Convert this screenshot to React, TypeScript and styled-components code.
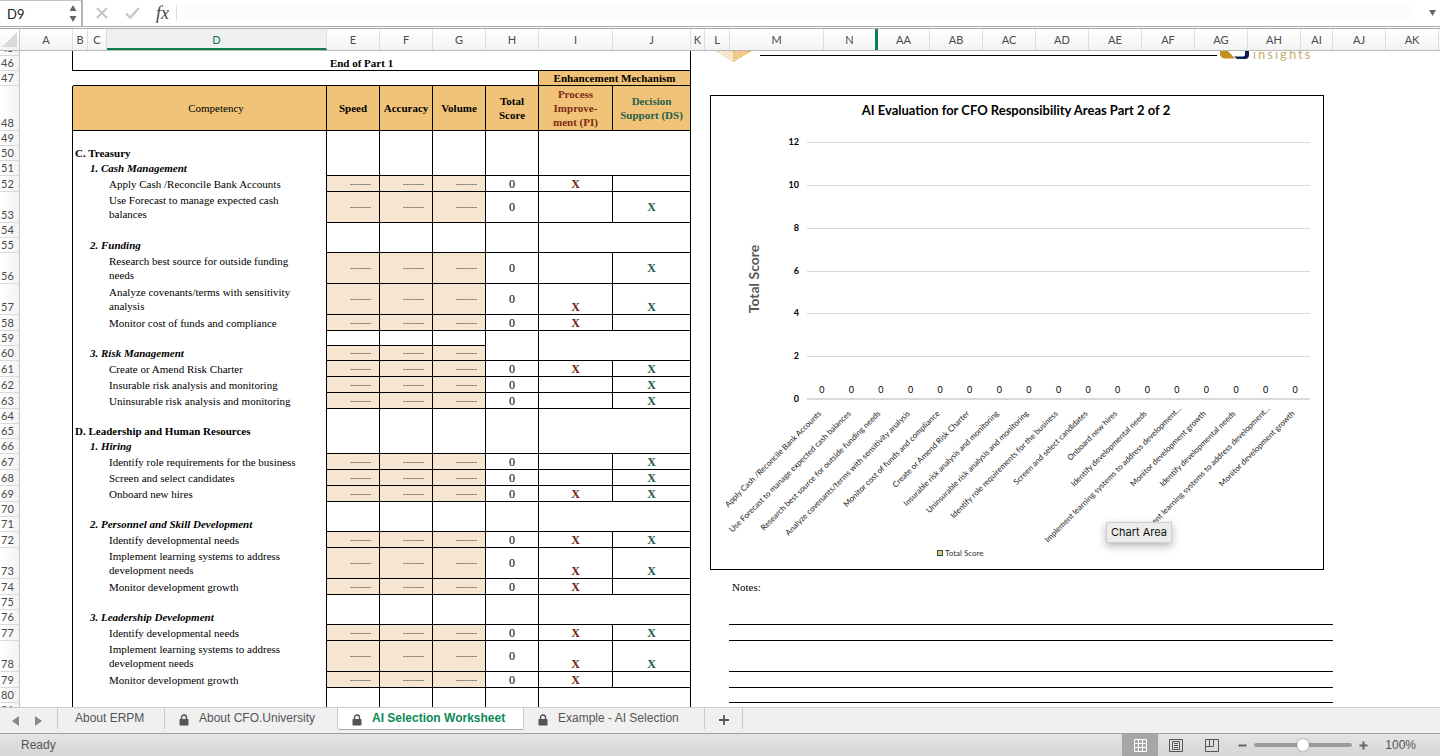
import React from "react";
import styled, { createGlobalStyle, css } from "styled-components";

const GlobalStyle = createGlobalStyle`
  *, *::before, *::after { box-sizing: border-box; }
  html, body { margin: 0; padding: 0; }
  body { background: #fff; overflow: hidden; font-family: "Liberation Sans", Arial, sans-serif; }
  button, input { font: inherit; color: inherit; margin: 0; padding: 0; border: 0; background: none; border-radius: 0; }
`;

const UI = `Lato, Calibri, sans-serif`;
const SERIF = `"Liberation Serif", "Times New Roman", serif`;
const GOLD = "#f0c378";
const CREAM = "#f6e6d1";
const RED = "#6f1d10";
const TEAL = "#1f5848";

const Workbook = styled.div`
  display: flex;
  flex-direction: column;
  height: 100vh;
  background: #fff;
`;

/* ---------- formula bar ---------- */

const FormulaBar = styled.header`
  display: flex;
  align-items: center;
  flex: none;
  height: 29px;
  border-bottom: 3px double #aaaaaa;
  background: #fff;
`;

const NameBox = styled.div`
  display: flex;
  align-items: center;
  align-self: stretch;
  width: 83px;
  padding: 0 4px 0 7px;
  border-top: 1px solid #c4c4c4;
  border-right: 2px solid #b4b4b4;
`;

const NameInput = styled.input`
  flex: 1;
  min-width: 0;
  font-family: ${UI};
  font-size: 13px;
  line-height: 20px;
  color: #222;
  outline: none;
`;

const IconButton = styled.button`
  display: flex;
  align-items: center;
  justify-content: center;
  flex: none;
  svg { display: block; }
`;

const FormulaActions = styled.div`
  display: flex;
  align-items: center;
  gap: 16px;
  height: 16px;
  padding: 0 7px 0 12px;
  border-right: 1px solid #dcdcdc;
`;

const FxButton = styled(IconButton)`
  font-family: ${SERIF};
  font-style: italic;
  font-size: 18px;
  line-height: 16px;
  color: #444;
`;

const FormulaInput = styled.input`
  flex: 1;
  min-width: 0;
  height: 18px;
  margin: 0 15px 0 7px;
  background: #fcfcfc;
  outline: none;
`;

const ExpandButton = styled(IconButton)`
  width: 15px;
`;

/* ---------- column letters ---------- */

const ColumnBar = styled.div`
  display: flex;
  flex: none;
  height: 22px;
  overflow: hidden;
  border-bottom: 1px solid #b6b6b6;
  background: linear-gradient(#ffffff, #f3f3f3);
`;

const Corner = styled.div`
  display: flex;
  align-items: flex-end;
  justify-content: flex-end;
  flex: none;
  width: 20px;
  padding: 0 2px 3px 0;
  border-right: 1px solid #c8c8c8;
`;

const ColumnHead = styled.div<{ $w: number; $active?: boolean; $split?: boolean }>`
  flex: none;
  width: ${(p) => p.$w}px;
  border-right: 1px solid #dedede;
  font-family: ${UI};
  font-size: 11px;
  line-height: 21px;
  text-align: center;
  color: #4a4a4a;
  ${(p) =>
    p.$active &&
    css`
      color: #0f7b47;
      background: #f0f0f0;
      border-bottom: 2px solid #0f7f4c;
    `}
  ${(p) => p.$split && css`border-right: 3px solid #0f7f4c;`}
`;

/* ---------- sheet ---------- */

const Sheet = styled.main`
  display: flex;
  align-items: flex-start;
  flex: 1;
  min-height: 0;
  overflow: hidden;
`;

const Grid = styled.table`
  flex: none;
  width: 691px;
  table-layout: fixed;
  border-collapse: separate;
  border-spacing: 0;
  font-family: ${SERIF};
  font-size: 11px;
  line-height: 14px;
  color: #000;
  th, td { padding: 0; }
`;

const Row = styled.tr<{ $h: number }>`
  height: ${(p) => p.$h}px;
`;

const RowNumber = styled.th`
  border-right: 1px solid #c4c4c4;
  border-bottom: 1px solid #dadada;
  background: linear-gradient(to right, #ffffff, #f3f3f3);
  font-family: ${UI};
  font-size: 11px;
  font-weight: 400;
  line-height: 14px;
  vertical-align: bottom;
  color: #4a4a4a;
`;

const NumberClip = styled.span<{ $h: number }>`
  display: flex;
  align-items: flex-end;
  justify-content: center;
  height: ${(p) => p.$h}px;
  padding-right: 4px;
  overflow: hidden;
`;

const Cell = styled.td<{
  $line?: boolean;
  $open?: boolean;
  $fill?: string;
  $color?: string;
  $bold?: boolean;
  $valign?: string;
}>`
  border-right: ${(p) => (p.$open ? "0" : "1px solid #000")};
  border-bottom: ${(p) => (p.$line ? "1px solid #000" : "0")};
  background: ${(p) => p.$fill || "transparent"};
  color: ${(p) => p.$color || "#000"};
  font-weight: ${(p) => (p.$bold ? 700 : 400)};
  text-align: center;
  vertical-align: ${(p) => p.$valign || "middle"};
  white-space: pre-line;
`;

const Score = styled(Cell)`
  font-size: 12px;
`;

const EndCell = styled(Cell)`
  && { padding-right: 40px; }
`;

const CompetencyHead = styled(Cell)`
  && { padding-left: 33px; }
`;

const indent = { section: 2, group: 17, item: 36 };

const Competency = styled(Cell)<{ $level: keyof typeof indent }>`
  && { padding: 0 0 1px ${(p) => indent[p.$level]}px; }
  text-align: left;
  font-weight: ${(p) => (p.$level === "item" ? 400 : 700)};
  font-style: ${(p) => (p.$level === "group" ? "italic" : "normal")};
`;

const Rating = styled(Cell)`
  && { padding-right: 8px; }
  text-align: right;
  font-size: 9px;
  font-weight: 700;
  color: #5f5952;
`;

type Line = {
  n: number;
  h: number;
  text?: string;
  level?: keyof typeof indent;
  kind: "blank" | "item" | "rated";
  pi?: boolean;
  ds?: boolean;
  low?: boolean;
  line?: boolean;
  lineEFG?: boolean;
};

const blank = (n: number, o: Partial<Line> = {}): Line => ({ n, h: 15, kind: "blank", ...o });
const item = (n: number, text: string, marks: string, low = false): Line => ({
  n,
  h: text.includes("\n") ? 31 : 16,
  text,
  level: "item",
  kind: "item",
  pi: marks.includes("P"),
  ds: marks.includes("D"),
  low,
  line: true,
});

const lines: Line[] = [
  blank(49),
  blank(50, { text: "C. Treasury", level: "section" }),
  blank(51, { text: "1. Cash Management", level: "group", line: true }),
  item(52, "Apply Cash /Reconcile Bank Accounts", "P"),
  item(53, "Use Forecast to manage expected cash\nbalances", "D"),
  blank(54),
  blank(55, { text: "2. Funding", level: "group", line: true }),
  item(56, "Research best source for outside funding\nneeds", "D"),
  item(57, "Analyze covenants/terms with sensitivity\nanalysis", "PD", true),
  item(58, "Monitor cost of funds and compliance", "P"),
  blank(59, { lineEFG: true }),
  blank(60, { text: "3. Risk Management", level: "group", kind: "rated", line: true }),
  item(61, "Create or Amend Risk Charter", "PD"),
  item(62, "Insurable risk analysis and monitoring", "D"),
  item(63, "Uninsurable risk analysis and monitoring", "D"),
  blank(64),
  blank(65, { text: "D. Leadership and Human Resources", level: "section" }),
  blank(66, { text: "1. Hiring", level: "group", line: true }),
  item(67, "Identify role requirements for the business", "D"),
  item(68, "Screen and select candidates", "D"),
  item(69, "Onboard new hires", "PD"),
  blank(70),
  blank(71, { text: "2. Personnel and Skill Development", level: "group", line: true }),
  item(72, "Identify developmental needs", "PD"),
  item(73, "Implement learning systems to address\ndevelopment needs", "PD", true),
  item(74, "Monitor development growth", "P"),
  blank(75),
  blank(76, { text: "3. Leadership Development", level: "group", line: true }),
  item(77, "Identify developmental needs", "PD"),
  item(78, "Implement learning systems to address\ndevelopment needs", "PD", true),
  item(79, "Monitor development growth", "P"),
  blank(80),
  blank(81),
];

const columns: [string, number][] = [
  ["A", 53], ["B", 15], ["C", 19], ["D", 220], ["E", 53], ["F", 53], ["G", 53], ["H", 53],
  ["I", 74], ["J", 78], ["K", 14], ["L", 25], ["M", 94], ["N", 54], ["AA", 52], ["AB", 53],
  ["AC", 53], ["AD", 53], ["AE", 53], ["AF", 53], ["AG", 53], ["AH", 53], ["AI", 32], ["AJ", 53],
  ["AK", 53],
];

const Num = ({ n, h }: { n: number; h: number }) => (
  <RowNumber scope="row">
    <NumberClip $h={h - 1}>{n}</NumberClip>
  </RowNumber>
);

const SheetRow = ({ l }: { l: Line }) => {
  const rated = l.kind !== "blank";
  return (
    <Row $h={l.h}>
      <Num n={l.n} h={l.h} />
      <Cell />
      <Competency $level={l.level || "item"}>{l.text}</Competency>
      {["E", "F", "G"].map((c) => (
        <Rating key={c} $line={l.line || l.lineEFG} $fill={rated ? CREAM : undefined}>
          {rated ? "-------" : ""}
        </Rating>
      ))}
      <Score $line={l.line}>{l.kind === "item" ? "0" : ""}</Score>
      {l.kind === "item" ? (
        <>
          <Score $line $bold $color={RED} $valign={l.low ? "bottom" : "middle"}>{l.pi ? "X" : ""}</Score>
          <Score $line $bold $color={TEAL} $valign={l.low ? "bottom" : "middle"}>{l.ds ? "X" : ""}</Score>
        </>
      ) : (
        <Cell colSpan={2} $line={l.line} />
      )}
    </Row>
  );
};

/* ---------- right-hand side ---------- */

const Side = styled.section`
  flex: 1;
  min-width: 0;
  padding: 0 107px 0 19px;
`;

const Masthead = styled.div`
  display: flex;
  align-items: flex-start;
  height: 44px;
  margin-right: 19px;
  svg { display: block; flex: none; }
`;

const Rule = styled.div`
  flex: 1;
  height: 5px;
  margin: 0 3px 0 8px;
  border-bottom: 1px solid #000;
`;

const ChartBox = styled.figure`
  position: relative;
  margin: 0 9px 0 0;
  border: 1px solid #000;
  background: #fff;
  svg { display: block; width: 100%; height: auto; }
`;

const Tooltip = styled.div`
  position: absolute;
  left: 395px;
  top: 426px;
  padding: 0 4px;
  border: 1px solid #cfcfcf;
  background: #ececec;
  box-shadow: 0 3px 8px rgba(0, 0, 0, 0.3);
  font-family: Inter, sans-serif;
  font-size: 11px;
  line-height: 19px;
  white-space: nowrap;
  color: #111;
`;

const Notes = styled.div`
  font-family: ${SERIF};
  font-size: 11px;
  line-height: 14px;
  padding: 10px 0 0 19px;
`;

const NotesTitle = styled.div`
  padding-left: 3px;
`;

const NoteLine = styled.div<{ $h: number }>`
  height: ${(p) => p.$h}px;
  border-bottom: 1px solid #000;
`;

const categories = [
  "Apply Cash /Reconcile Bank Accounts",
  "Use Forecast to manage expected cash balances",
  "Research best source for outside funding needs",
  "Analyze covenants/terms with sensitivity analysis",
  "Monitor cost of funds and compliance",
  "Create or Amend Risk Charter",
  "Insurable risk analysis and monitoring",
  "Uninsurable risk analysis and monitoring",
  "Identify role requirements for the business",
  "Screen and select candidates",
  "Onboard new hires",
  "Identify developmental needs",
  "Implement learning systems to address development…",
  "Monitor development growth",
  "Identify developmental needs",
  "Implement learning systems to address development…",
  "Monitor development growth",
];

const PLOT = { left: 96, right: 599, top: 46, bottom: 303 };

const Chart = () => {
  const step = (PLOT.right - PLOT.left) / categories.length;
  return (
    <svg viewBox="0 0 612 473" role="img" aria-label="AI Evaluation for CFO Responsibility Areas Part 2 of 2" fontFamily={UI}>
      <text x="305" y="19" textAnchor="middle" fontSize="13" fontWeight="700">
        AI Evaluation for CFO Responsibility Areas Part 2 of 2
      </text>
      {[12, 10, 8, 6, 4, 2, 0].map((v, i) => {
        const y = Math.round(PLOT.top + ((PLOT.bottom - PLOT.top) * i) / 6);
        return (
          <g key={v}>
            <rect x={PLOT.left} y={v ? y : y - 1} width={PLOT.right - PLOT.left} height={v ? 1 : 2} fill="#d9d9d9" />
            <text x="88" y={y + 3} textAnchor="end" fontSize="9" fontWeight="700">{v}</text>
          </g>
        );
      })}
      <text transform="translate(48 183) rotate(-90)" textAnchor="middle" fontSize="14" fontWeight="700" fill="#595959">
        Total Score
      </text>
      {categories.map((c, i) => {
        const x = PLOT.left + step * (i + 0.5);
        const lift = c.endsWith("…") ? 5 : 0;
        return (
          <g key={i}>
            <text x={x} y="297" textAnchor="middle" fontSize="9">0</text>
            <text transform={`translate(${x + lift} ${318 - lift}) rotate(-45)`} textAnchor="end" fontSize="8" fill="#222">
              {c}
            </text>
          </g>
        );
      })}
      <rect x="226.500" y="454.500" width="5" height="5" fill={GOLD} stroke={TEAL} />
      <text x="234" y="460" fontSize="8" fill="#333">Total Score</text>
    </svg>
  );
};

/* ---------- tabs and status ---------- */

const TabBar = styled.nav`
  display: flex;
  align-items: flex-start;
  flex: none;
  height: 26px;
  border-top: 1px solid #c9c9c9;
  background: #f0f0f0;
`;

const TabArrows = styled.div`
  display: flex;
  align-items: center;
  gap: 16px;
  width: 58px;
  height: 21px;
  padding: 4px 0 0 12px;
  border-right: 1px solid #c9c9c9;
`;

const Tab = styled.button<{ $w: number; $active?: boolean; $plain?: boolean }>`
  display: flex;
  align-items: center;
  gap: 10px;
  min-width: ${(p) => p.$w}px;
  height: 21px;
  padding: 0 0 1px ${(p) => (p.$plain ? 17 : 14)}px;
  border-right: 1px solid #c9c9c9;
  font-size: 12px;
  line-height: 20px;
  white-space: nowrap;
  color: #555;
  svg { position: relative; top: 2px; }
  ${(p) =>
    p.$active &&
    css`
      height: 22px;
      padding-bottom: 2px;
      background: #fff;
      color: #0b8a53;
      font-weight: 700;
      border-bottom: 1px solid #a8a8a8;
      border-radius: 0 0 2px 2px;
    `}
`;

const AddTab = styled(IconButton)`
  width: 38px;
  height: 21px;
  padding-top: 3px;
  border-right: 1px solid #c9c9c9;
`;

const StatusBar = styled.footer`
  display: flex;
  align-items: stretch;
  flex: none;
  height: 23px;
  border-top: 1px solid #a0a0a0;
  background: linear-gradient(#e4e4e4, #d6d6d6);
  font-size: 12px;
  line-height: 22px;
  color: #555;
`;

const Ready = styled.span`
  flex: 1;
  padding-left: 21px;
`;

const ViewButton = styled(IconButton)<{ $active?: boolean }>`
  width: 36px;
  background: ${(p) => (p.$active ? "#a6a6a6" : "transparent")};
`;

const Zoom = styled.div`
  display: flex;
  align-items: center;
  gap: 7px;
  padding: 0 24px 0 8px;
`;

const Slider = styled.input`
  appearance: none;
  width: 98px;
  height: 14px;
  &::-webkit-slider-runnable-track {
    height: 4px;
    border-radius: 2px;
    background: #9c9c9c;
  }
  &::-webkit-slider-thumb {
    appearance: none;
    width: 12px;
    height: 12px;
    margin-top: -4px;
    border-radius: 50%;
    background: #fff;
    box-shadow: 0 0 2px rgba(0, 0, 0, 0.5);
  }
`;

const Percent = styled.span`
  padding-left: 10px;
`;

const Lock = () => (
  <svg width="10" height="12" viewBox="0 0 10 12" aria-hidden="true">
    <path d="M2.500 6V3.500a2.500 2.500 0 0 1 5 0V6" fill="none" stroke="#555" strokeWidth="1.400" />
    <rect x="0.500" y="5" width="9" height="6.500" rx="0.800" fill="#555" />
  </svg>
);

const Triangle = ({ d, w = 8, h = 6, fill = "#666" }: { d: string; w?: number; h?: number; fill?: string }) => (
  <svg width={w} height={h} viewBox={`0 0 ${w} ${h}`} aria-hidden="true">
    <path d={d} fill={fill} />
  </svg>
);

const Steppers = styled.div`
  display: flex;
  flex-direction: column;
  gap: 5px;
`;

export default function App() {
  return (
    <Workbook>
      <GlobalStyle />
      <FormulaBar>
        <NameBox>
          <NameInput aria-label="Name box" defaultValue="D9" />
          <Steppers>
            <IconButton aria-label="Previous name"><Triangle d="M4 0L7.500 6H.5z" /></IconButton>
            <IconButton aria-label="Next name"><Triangle d="M4 6L7.500 0H.5z" /></IconButton>
          </Steppers>
        </NameBox>
        <FormulaActions>
          <IconButton aria-label="Cancel">
            <svg width="14" height="14" viewBox="0 0 14 14"><path d="M2 2l10 10M12 2L2 12" stroke="#c6c6c6" strokeWidth="2.200" /></svg>
          </IconButton>
          <IconButton aria-label="Enter">
            <svg width="15" height="14" viewBox="0 0 15 14"><path d="M1 7.500l4.200 4L14 2" stroke="#c6c6c6" strokeWidth="2.400" fill="none" /></svg>
          </IconButton>
          <FxButton aria-label="Insert function">fx</FxButton>
        </FormulaActions>
        <FormulaInput aria-label="Formula" />
        <ExpandButton aria-label="Expand formula bar"><Triangle d="M0 0h7L3.500 6z" w={7} /></ExpandButton>
      </FormulaBar>

      <ColumnBar>
        <Corner>
          <svg width="15" height="15" viewBox="0 0 15 15" aria-hidden="true"><path d="M15 0v15H0z" fill="#d9d9d9" /></svg>
        </Corner>
        {columns.map(([name, w]) => (
          <ColumnHead key={name} $w={w} $active={name === "D"} $split={name === "N"}>{name}</ColumnHead>
        ))}
      </ColumnBar>

      <Sheet>
        <Grid>
          <colgroup>
            {[20, 53, 254, 53, 53, 53, 53, 74, 78].map((w, i) => (
              <col key={i} width={w} />
            ))}
          </colgroup>
          <tbody>
            <Row $h={5}>
              <Num n={45} h={5} />
              <Cell />
              <Cell colSpan={7} />
            </Row>
            <Row $h={15}>
              <Num n={46} h={15} />
              <Cell />
              <EndCell colSpan={7} $line $bold>End of Part 1</EndCell>
            </Row>
            <Row $h={15}>
              <Num n={47} h={15} />
              <Cell $open />
              <Cell colSpan={5} $line />
              <Cell colSpan={2} $line $bold $fill={GOLD}>Enhancement Mechanism</Cell>
            </Row>
            <Row $h={45}>
              <Num n={48} h={45} />
              <Cell />
              <CompetencyHead $line $fill={GOLD}>Competency</CompetencyHead>
              <Cell $line $bold $fill={GOLD}>Speed</Cell>
              <Cell $line $bold $fill={GOLD}>Accuracy</Cell>
              <Cell $line $bold $fill={GOLD}>Volume</Cell>
              <Cell $line $bold $fill={GOLD}>{"Total\nScore"}</Cell>
              <Cell $line $bold $fill={GOLD} $color="#7d2c12">{"Process\nImprove-\nment (PI)"}</Cell>
              <Cell $line $bold $fill={GOLD} $color="#265f4c">{"Decision\nSupport (DS)"}</Cell>
            </Row>
            {lines.map((l) => (
              <SheetRow key={l.n} l={l} />
            ))}
          </tbody>
        </Grid>

        <Side>
          <Masthead>
            <svg width="42" height="12" viewBox="0 0 42 12" aria-hidden="true">
              <path d="M5 0H23V11z" fill="#f5e3c4" />
              <path d="M23 0H42L23 11z" fill="#eebb6a" />
              <path d="M10 0l13 8M16 0l7 4.500M37 1L23 9M34 0L23 6M29 0l-6 3" stroke="#fff" strokeWidth="0.600" fill="none" />
            </svg>
            <Rule />
            <svg width="94" height="12" viewBox="0 0 94 12" aria-hidden="true">
              <path d="M0 0h8l7 7.500H5q-4 0-5-4z" fill="#c1901f" />
              <path d="M14 5.500h8q3 0 3-2V0h4v4q0 4-4 4H17z" fill="#0d1f4f" />
              <text x="33" y="8" fontFamily={UI} fontSize="13" letterSpacing="2" fill="#c4b06c">insights</text>
            </svg>
          </Masthead>
          <ChartBox>
            <Chart />
            <Tooltip role="tooltip">Chart Area</Tooltip>
          </ChartBox>
          <Notes>
            <NotesTitle>Notes:</NotesTitle>
            {[31, 16, 31, 16, 15].map((h, i) => (
              <NoteLine key={i} $h={h} />
            ))}
          </Notes>
        </Side>
      </Sheet>

      <TabBar>
        <TabArrows>
          <IconButton aria-label="Previous sheet"><Triangle d="M7 0v10L0 5z" w={7} h={10} fill="#888" /></IconButton>
          <IconButton aria-label="Next sheet"><Triangle d="M0 0v10l7-5z" w={7} h={10} fill="#888" /></IconButton>
        </TabArrows>
        <Tab $w={107} $plain>About ERPM</Tab>
        <Tab $w={173}><Lock />About CFO.University</Tab>
        <Tab $w={186} $active><Lock />AI Selection Worksheet</Tab>
        <Tab $w={181}><Lock />Example - AI Selection</Tab>
        <AddTab aria-label="Add sheet">
          <svg width="12" height="12" viewBox="0 0 12 12"><path d="M6 1v10M1 6h10" stroke="#555" strokeWidth="1.800" /></svg>
        </AddTab>
      </TabBar>

      <StatusBar>
        <Ready>Ready</Ready>
        <ViewButton $active aria-label="Normal view">
          <svg width="13" height="13" viewBox="0 0 13 13">
            <path d="M.5.5h12v12H.5zM4.500 0v13M8.500 0v13M0 4.500h13M0 8.500h13" fill="none" stroke="#fff" />
          </svg>
        </ViewButton>
        <ViewButton aria-label="Page layout view">
          <svg width="14" height="13" viewBox="0 0 14 13">
            <path d="M.5.5h13v12H.5zM3.500 2.500h7v8h-7zM5 4.500h4M5 6.500h4M5 8.500h4" fill="none" stroke="#555" />
          </svg>
        </ViewButton>
        <ViewButton aria-label="Page break view">
          <svg width="14" height="13" viewBox="0 0 14 13">
            <path d="M.5.5h13v12H.5zM.5 7.500h8v-7M4.500.5v7" fill="none" stroke="#555" />
          </svg>
        </ViewButton>
        <Zoom>
          <IconButton aria-label="Zoom out">
            <svg width="9" height="9" viewBox="0 0 9 9"><path d="M.5 4.500h8" stroke="#666" strokeWidth="2" /></svg>
          </IconButton>
          <Slider type="range" aria-label="Zoom" min={0} max={100} defaultValue={50} />
          <IconButton aria-label="Zoom in">
            <svg width="9" height="9" viewBox="0 0 9 9"><path d="M.5 4.500h8M4.500.5v8" stroke="#666" strokeWidth="2" /></svg>
          </IconButton>
          <Percent>100%</Percent>
        </Zoom>
      </StatusBar>
    </Workbook>
  );
}
